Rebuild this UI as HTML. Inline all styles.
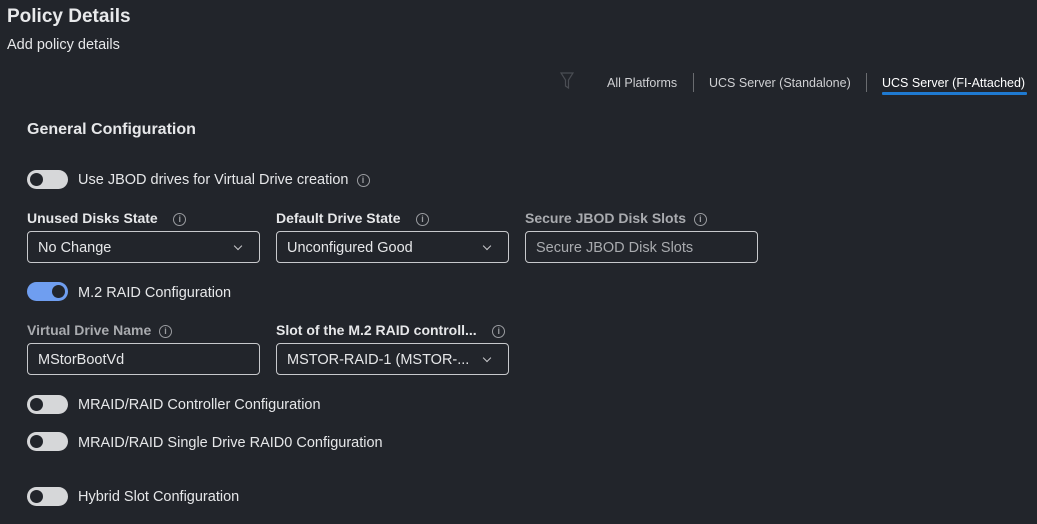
<!DOCTYPE html><html><head><style>
body{margin:0;width:1037px;height:524px;background:#22252b;font-family:"Liberation Sans",sans-serif;color:#e6e7e9;position:relative;overflow:hidden}
.a{position:absolute;white-space:nowrap}
.tg{position:absolute;width:41px;height:19px;border-radius:10px;background:#d6d7d9}
.tg::after{content:"";position:absolute;left:3px;top:3px;width:13px;height:13px;border-radius:50%;background:#22252b}
.tg.on{background:#6f9ef0}.tg.on::after{left:25px}
.in{position:absolute;height:30px;border:1.5px solid #c8c9cc;border-radius:4px;font-size:14.5px;line-height:33px;padding-left:10px;box-sizing:content-box;width:221px}
.lb{font-size:14px;font-weight:bold}
.i{display:inline-block;width:11px;height:11px;border:1px solid #9a9ca0;border-radius:50%;font-size:9px;line-height:11px;text-align:center;color:#9a9ca0;font-weight:bold;vertical-align:middle}
.ch{position:absolute;right:18px;top:11px;width:5px;height:5px;border-right:1.3px solid #c8c9cc;border-bottom:1.3px solid #c8c9cc;transform:rotate(45deg)}
.t{font-size:14.5px}
</style></head><body>
<div class="a" style="left:7px;top:6px;font-size:19px;font-weight:bold;color:#e8e9eb">Policy Details</div>
<div class="a" style="left:7px;top:37px;font-size:14.5px">Add policy details</div>
<svg class="a" style="left:560px;top:72px" width="14" height="18"><path d="M1 1H13L8.5 8V16L5.5 14V8Z" fill="none" stroke="#4a4d53" stroke-width="1.2"/></svg>
<div class="a" style="left:607px;top:76px;font-size:12.5px;color:#cfd0d3">All Platforms</div>
<div class="a" style="left:693px;top:73px;width:1px;height:19px;background:#6a6c70"></div>
<div class="a" style="left:709px;top:76px;font-size:12.5px;color:#cfd0d3">UCS Server (Standalone)</div>
<div class="a" style="left:866px;top:73px;width:1px;height:19px;background:#6a6c70"></div>
<div class="a" style="left:882px;top:76px;font-size:12.5px;color:#fff">UCS Server (FI-Attached)</div>
<div class="a" style="left:882px;top:92px;width:145px;height:3px;background:#1f7ad1;border-radius:1px"></div>
<div class="a" style="left:27px;top:121px;font-size:16px;font-weight:bold">General Configuration</div>
<div class="tg" style="left:27px;top:170px"></div>
<div class="a t" style="left:78px;top:172px">Use JBOD drives for Virtual Drive creation &nbsp;<span class="i">i</span></div>
<div class="a lb" style="left:27px;top:210px">Unused Disks State &nbsp;&nbsp;&nbsp;<span class="i">i</span></div>
<div class="a lb" style="left:276px;top:210px">Default Drive State &nbsp;&nbsp;&nbsp;<span class="i">i</span></div>
<div class="a lb" style="left:525px;top:210px;color:#a9abaf">Secure JBOD Disk Slots &nbsp;<span class="i">i</span></div>
<div class="in" style="left:27px;top:231px">No Change<span class="ch"></span></div>
<div class="in" style="left:276px;top:231px">Unconfigured Good<span class="ch"></span></div>
<div class="in" style="left:525px;top:231px;color:#a9abaf">Secure JBOD Disk Slots</div>
<div class="tg on" style="left:27px;top:282px"></div>
<div class="a t" style="left:78px;top:285px">M.2 RAID Configuration</div>
<div class="a lb" style="left:27px;top:322px;color:#a9abaf">Virtual Drive Name &nbsp;<span class="i">i</span></div>
<div class="a lb" style="left:276px;top:322px">Slot of the M.2 RAID controll... &nbsp;&nbsp;&nbsp;<span class="i">i</span></div>
<div class="in" style="left:27px;top:343px">MStorBootVd</div>
<div class="in" style="left:276px;top:343px">MSTOR-RAID-1 (MSTOR-...<span class="ch"></span></div>
<div class="tg" style="left:27px;top:395px"></div>
<div class="a t" style="left:78px;top:397px">MRAID/RAID Controller Configuration</div>
<div class="tg" style="left:27px;top:432px"></div>
<div class="a t" style="left:78px;top:435px">MRAID/RAID Single Drive RAID0 Configuration</div>
<div class="tg" style="left:27px;top:487px"></div>
<div class="a t" style="left:78px;top:489px">Hybrid Slot Configuration</div>
</body></html>
